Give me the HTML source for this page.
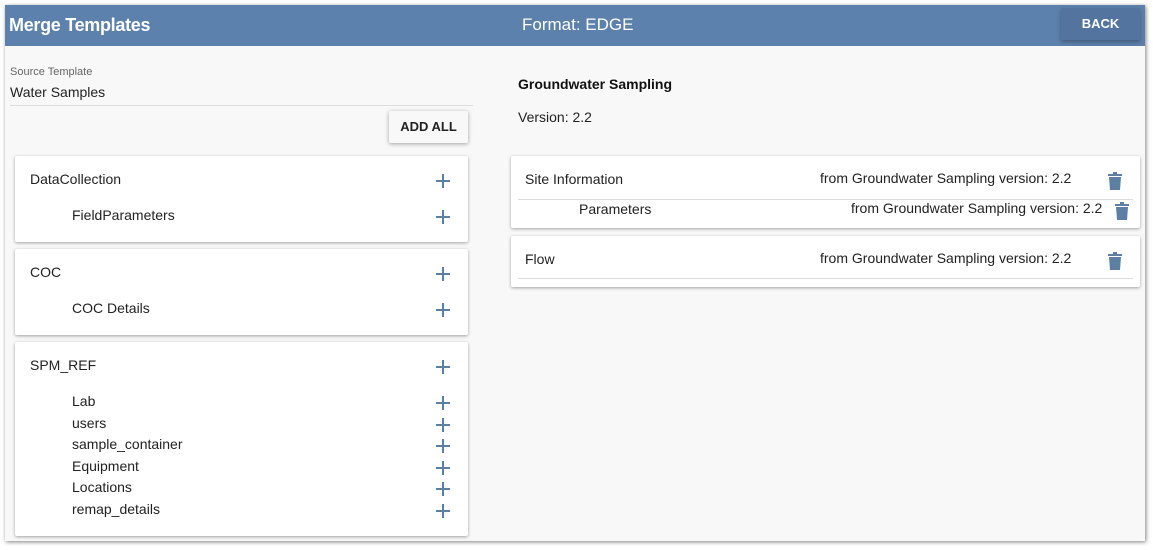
<!DOCTYPE html>
<html><head><style>
*{box-sizing:border-box;margin:0;padding:0}
body{width:1153px;height:550px;background:#fff;font-family:"Liberation Sans",sans-serif;position:relative;overflow:hidden}
#frame{position:absolute;left:5px;top:5px;width:1140px;height:536px;background:#f8f8f8;box-shadow:1px 1px 4px rgba(0,0,0,.5)}
#hdr{position:absolute;left:0;top:0;width:1140px;height:41px;background:#5c81ad}
.abs{position:absolute;white-space:nowrap}
.card{position:absolute;background:#fff;border-radius:2px;box-shadow:0 1px 3px rgba(0,0,0,.35)}
.t{font-size:14px;color:#222}
.plus{position:absolute;width:14px;height:14px}
.plus:before{content:"";position:absolute;left:0;top:6px;width:14px;height:2px;background:#5c7fa6}
.plus:after{content:"";position:absolute;left:6px;top:0;width:2px;height:14px;background:#5c7fa6}
.trash{position:absolute;width:14px;height:18px}
</style></head><body>
<div id="frame">
<div id="hdr">
<div class="abs" style="left:4px;top:10px;font-size:18px;font-weight:bold;color:#fff;letter-spacing:-0.3px">Merge Templates</div>
<div class="abs" style="left:517px;top:10px;font-size:17px;color:#fff">Format: EDGE</div>
<div class="abs" style="left:1056px;top:3px;width:79px;height:32px;background:#52749f;box-shadow:0 2px 4px rgba(0,0,0,.3);border-radius:2px;color:#fff;font-size:13px;font-weight:bold;text-align:center;line-height:32px">BACK</div>
</div>
<div class="abs" style="left:5px;top:61px;font-size:11px;color:#666">Source Template</div>
<div class="abs t" style="left:5px;top:79px">Water Samples</div>
<div class="abs" style="left:5px;top:100px;width:463px;height:1px;background:#ddd"></div>
<div class="abs" style="left:384px;top:106px;width:79px;height:32px;background:#f8f8f8;box-shadow:0 1px 4px rgba(0,0,0,.35);border-radius:2px;font-size:13px;font-weight:bold;text-align:center;line-height:32px;color:#222">ADD ALL</div>

<div class="card" style="left:10px;top:151px;width:453px;height:86px">
<div class="abs t" style="left:15px;top:15px">DataCollection</div><div class="plus" style="left:421px;top:18px"></div>
<div class="abs t" style="left:57px;top:51px">FieldParameters</div><div class="plus" style="left:421px;top:54px"></div>
</div>
<div class="card" style="left:10px;top:244px;width:453px;height:86px">
<div class="abs t" style="left:15px;top:15px">COC</div><div class="plus" style="left:421px;top:18px"></div>
<div class="abs t" style="left:57px;top:51px">COC Details</div><div class="plus" style="left:421px;top:54px"></div>
</div>
<div class="card" style="left:10px;top:337px;width:453px;height:194px">
<div class="abs t" style="left:15px;top:15px">SPM_REF</div><div class="plus" style="left:421px;top:18px"></div>
<div class="abs t" style="left:57px;top:51px">Lab</div><div class="plus" style="left:421px;top:54px"></div>
<div class="abs t" style="left:57px;top:73px">users</div><div class="plus" style="left:421px;top:76px"></div>
<div class="abs t" style="left:57px;top:94px">sample_container</div><div class="plus" style="left:421px;top:97px"></div>
<div class="abs t" style="left:57px;top:116px">Equipment</div><div class="plus" style="left:421px;top:119px"></div>
<div class="abs t" style="left:57px;top:137px">Locations</div><div class="plus" style="left:421px;top:140px"></div>
<div class="abs t" style="left:57px;top:159px">remap_details</div><div class="plus" style="left:421px;top:162px"></div>
</div>

<div class="abs" style="left:513px;top:71px;font-size:14px;font-weight:bold;color:#111">Groundwater Sampling</div>
<div class="abs t" style="left:513px;top:104px">Version: 2.2</div>

<div class="card" style="left:506px;top:151px;width:629px;height:72px">
<div class="abs t" style="left:14px;top:15px">Site Information</div>
<div class="abs t" style="left:309px;top:14px">from Groundwater Sampling version: 2.2</div>
<svg class="trash" style="left:597px;top:16px" viewBox="0 0 14 18"><rect x="0" y="2" width="14" height="2" fill="#5c7fa6"/><rect x="5" y="0" width="4" height="3" fill="#5c7fa6"/><path d="M1 5h12l-1 13H2z" fill="#5c7fa6"/></svg>
<div class="abs" style="left:7px;top:43px;width:615px;height:1px;background:#ddd"></div>
<div class="abs t" style="left:68px;top:45px">Parameters</div>
<div class="abs t" style="left:340px;top:44px">from Groundwater Sampling version: 2.2</div>
<svg class="trash" style="left:604px;top:46px" viewBox="0 0 14 18"><rect x="0" y="2" width="14" height="2" fill="#5c7fa6"/><rect x="5" y="0" width="4" height="3" fill="#5c7fa6"/><path d="M1 5h12l-1 13H2z" fill="#5c7fa6"/></svg>
</div>
<div class="card" style="left:506px;top:231px;width:629px;height:51px">
<div class="abs t" style="left:14px;top:15px">Flow</div>
<div class="abs t" style="left:309px;top:14px">from Groundwater Sampling version: 2.2</div>
<svg class="trash" style="left:597px;top:16px" viewBox="0 0 14 18"><rect x="0" y="2" width="14" height="2" fill="#5c7fa6"/><rect x="5" y="0" width="4" height="3" fill="#5c7fa6"/><path d="M1 5h12l-1 13H2z" fill="#5c7fa6"/></svg>
<div class="abs" style="left:7px;top:42px;width:615px;height:1px;background:#ddd"></div>
</div>
</div>
</body></html>
